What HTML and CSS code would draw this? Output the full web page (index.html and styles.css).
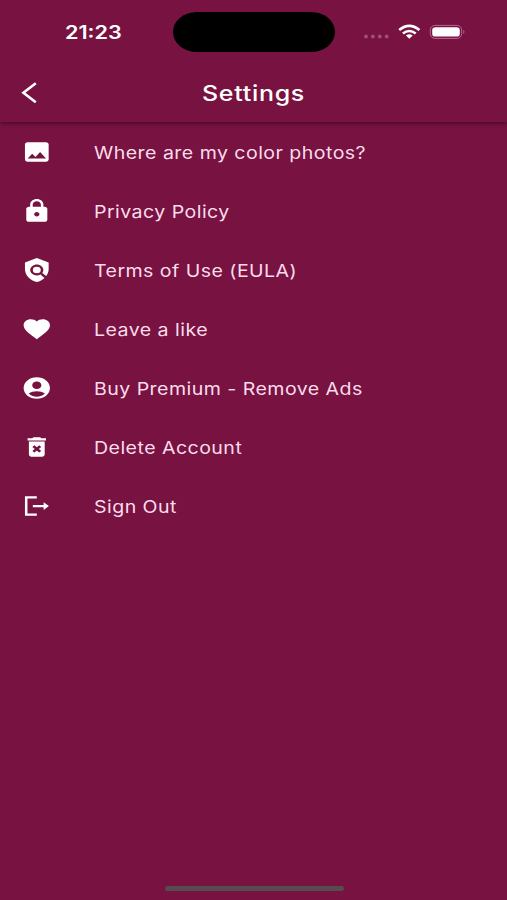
FILE: index.html
```html
<!DOCTYPE html>
<html lang="en">
<head>
<meta charset="utf-8">
<title>Settings</title>
<link rel="stylesheet" href="styles.css">
</head>
<body>
<header class="header">
  <div class="status">
    <span class="time">21:23</span>
    <div class="island"></div>
    <svg class="indicators" width="104" height="20" viewBox="0 0 104 20">
      <g fill="#a04f76"><circle cx="3" cy="14.500" r="1.900"/><circle cx="9.900" cy="14.500" r="1.900"/><circle cx="16.800" cy="14.500" r="1.900"/><circle cx="23.700" cy="14.500" r="1.900"/></g>
      <g fill="none" stroke="#fff" stroke-width="2.600"><path d="M36.200 8Q46.300 -0.300 56.400 8"/><path d="M39.900 11.600Q46.300 6.400 52.700 11.600"/></g>
      <path d="M42.900 13.600Q46.300 11 49.700 13.600L46.300 16.800Z" fill="#fff"/>
      <rect x="67.300" y="3.400" width="31.400" height="13" rx="4.600" fill="none" stroke="#b4688d"/>
      <rect x="69.200" y="5.200" width="27.600" height="9.400" rx="3.200" fill="#fff"/>
      <path d="M100.300 7.800Q102.600 9.900 100.300 12Z" fill="#b4688d"/>
    </svg>
  </div>
  <div class="bar">
    <svg class="back" width="18" height="24" viewBox="0 0 18 24"><path d="M14.800 2.200L2.400 11.700L14.800 21.200" fill="none" stroke="#fff" stroke-width="2.600"/></svg>
    <h1 class="title">Settings</h1>
  </div>
</header>
<main class="list">
  <div class="row">
    <svg class="icon" viewBox="0 0 24 24" preserveAspectRatio="none"><path d="M21 19V5c0-1.100-.9-2-2-2H5c-1.100 0-2 .9-2 2v14c0 1.100.9 2 2 2h14c1.100 0 2-.9 2-2zM8.500 13.500l2.500 3L14.500 12l4.500 6H5z"/></svg>
    <span class="label">Where are my color photos?</span>
  </div>
  <div class="row">
    <svg class="icon" viewBox="0 0 24 24" preserveAspectRatio="none"><path fill-rule="evenodd" d="M18 8h-1V6c0-2.760-2.240-5-5-5S7 3.240 7 6v2H6c-1.100 0-2 .9-2 2v10c0 1.100.9 2 2 2h12c1.100 0 2-.9 2-2V10c0-1.100-.9-2-2-2zM12 17c-1.100 0-2-.9-2-2s.9-2 2-2 2 .9 2 2-.9 2-2 2zM15.100 8H8.900V6c0-1.710 1.390-3.100 3.100-3.100s3.100 1.390 3.100 3.100z"/></svg>
    <span class="label">Privacy Policy</span>
  </div>
  <div class="row">
    <svg class="icon" viewBox="0 0 24 24" preserveAspectRatio="none"><path d="M21 5l-9-4-9 4v6c0 5.550 3.840 10.740 9 12 2.300-.56 4.330-1.900 5.880-3.710l-3.120-3.120c-1.940 1.290-4.580 1.070-6.290-.64-1.950-1.950-1.950-5.120 0-7.070s5.120-1.950 7.070 0c1.710 1.710 1.920 4.350.64 6.290l2.900 2.900C20.290 15.690 21 13.380 21 11z"/><circle cx="12" cy="12" r="3"/></svg>
    <span class="label">Terms of Use (EULA)</span>
  </div>
  <div class="row">
    <svg class="icon" viewBox="0 0 24 24" preserveAspectRatio="none"><path d="M12 21.350l-1.450-1.320C5.400 15.360 2 12.280 2 8.500 2 5.420 4.420 3 7.500 3c1.740 0 3.410.81 4.500 2.090C13.090 3.810 14.760 3 16.500 3 19.580 3 22 5.420 22 8.500c0 3.780-3.400 6.860-8.550 11.540z"/></svg>
    <span class="label">Leave a like</span>
  </div>
  <div class="row">
    <svg class="icon" viewBox="0 0 24 24" preserveAspectRatio="none"><path d="M12 2C6.480 2 2 6.480 2 12s4.480 10 10 10 10-4.480 10-10S17.520 2 12 2zm0 4c1.930 0 3.500 1.570 3.500 3.500S13.930 13 12 13s-3.500-1.570-3.500-3.500S10.070 6 12 6zm0 14c-2.030 0-4.430-.82-6.140-2.880C7.550 15.800 9.680 15 12 15s4.450.8 6.140 2.120C16.430 19.180 14.030 20 12 20z"/></svg>
    <span class="label">Buy Premium - Remove Ads</span>
  </div>
  <div class="row">
    <svg class="icon" viewBox="0 0 24 24" preserveAspectRatio="none"><path d="M6 19c0 1.100.9 2 2 2h8c1.100 0 2-.9 2-2V7H6zM19 4h-3.500l-1-1h-5l-1 1H5v2h14z"/><path class="cross" d="M9.400 11.200l5.200 5.200M14.600 11.200l-5.200 5.200"/></svg>
    <span class="label">Delete Account</span>
  </div>
  <div class="row">
    <svg class="icon" viewBox="0 0 24 24" preserveAspectRatio="none"><path d="M3 3h9v2H4.900v14H12v2H3zM9 11.100h8.200V8.500L21.200 12.100l-4 3.600V13.100H9z"/></svg>
    <span class="label">Sign Out</span>
  </div>
</main>
<footer class="home"></footer>
</body>
</html>
```
FILE: styles.css
```css
* { box-sizing: border-box; }
body {
  margin: 0;
  height: 900px;
  display: flex;
  flex-direction: column;
  overflow: hidden;
  background: #781240;
  color: #fff;
  font-family: Inter, "Liberation Sans", sans-serif;
}
.header {
  height: 122px;
  flex: none;
  background: #781240;
  box-shadow: 0 1px 4px rgba(25, 0, 20, .6);
}
.status {
  height: 64px;
  display: grid;
  grid-template-columns: 173px 162px 1fr;
  align-items: center;
}
.time {
  padding: 2px 0 0 65px;
  font-size: 18px;
  font-weight: 600;
  line-height: 24px;
  transform: scaleX(1.2);
  transform-origin: 65px 50%;
}
.island {
  height: 40px;
  border-radius: 24px / 20px;
  background: #000;
}
.indicators { margin-left: 28px; }
.bar {
  height: 58px;
  display: grid;
  grid-template-columns: 60px 1fr 60px;
  align-items: center;
}
.back { margin-left: 21px; }
.title {
  margin: 0;
  padding-top: 1px;
  text-align: center;
  font-size: 21px;
  font-weight: 500;
  line-height: 28px;
  letter-spacing: .6px;
  transform: scaleX(1.19);
}
.list { flex: 1; }
.row {
  height: 59.1px;
  display: flex;
  align-items: center;
  padding-left: 21px;
}
.icon {
  width: 31.6px;
  height: 26px;
  margin-right: 41.400px;
  fill: #fff;
}
.cross { stroke: #781240; stroke-width: 2.2; }
.label {
  padding-top: 2px;
  font-size: 17px;
  line-height: 24px;
  letter-spacing: .4px;
  white-space: nowrap;
  color: #fbdcec;
  transform: scaleX(1.15);
  transform-origin: left;
}
.home {
  width: 179px;
  height: 5px;
  flex: none;
  margin: 0 auto 9px 165px;
  border-radius: 3px;
  background: #554b50;
}
```
